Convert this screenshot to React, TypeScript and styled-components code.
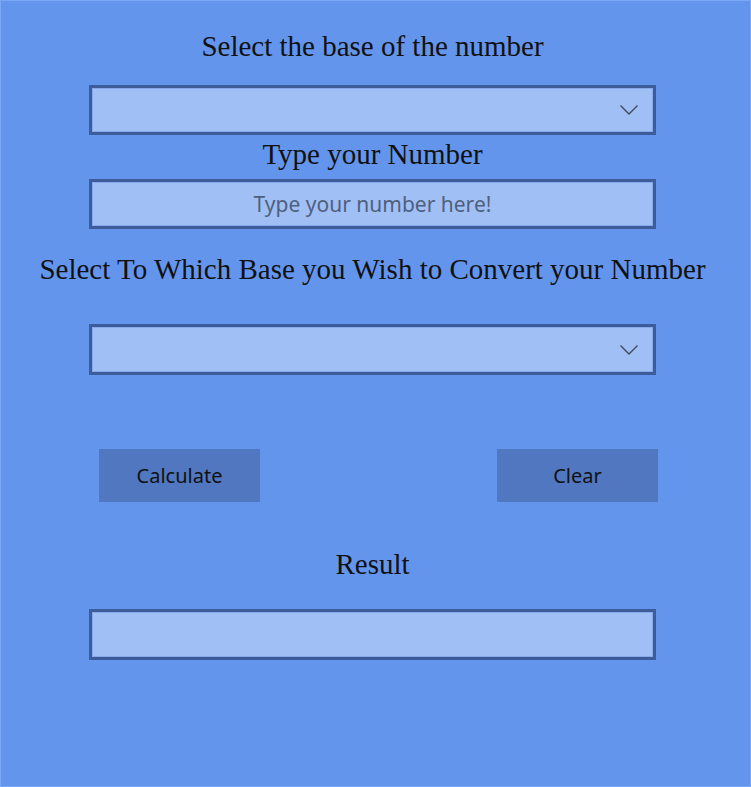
import styled, { createGlobalStyle } from 'styled-components';

const GlobalStyle = createGlobalStyle`
  html, body {
    margin: 0;
    padding: 0;
    background: #6495ed;
  }
  * {
    box-sizing: border-box;
  }
`;

const Window = styled.div`
  width: 751px;
  height: 787px;
  background: #6495ed;
  border: 1px solid #7aa8f7;
  display: flex;
  flex-direction: column;
  padding-top: 31px;
`;

const Column = styled.div`
  width: 743px;
  display: flex;
  flex-direction: column;
  align-items: center;
`;

const Label = styled.div<{ $top?: number }>`
  margin-top: ${(p) => p.$top || 0}px;
  height: 30px;
  line-height: 28px;
  font-family: 'Liberation Serif', 'DejaVu Serif', serif;
  font-size: 29px;
  color: #111;
  white-space: nowrap;
`;

const Field = styled.div<{ $top?: number; $height?: number }>`
  margin-top: ${(p) => p.$top || 0}px;
  width: 567px;
  height: ${(p) => p.$height || 50}px;
  background: #a0bff5;
  border: 3px solid #3d5c99;
  box-shadow: inset 0 0 0 1px #86a9ec;
  display: flex;
  align-items: center;
  justify-content: flex-end;
  padding-right: 14px;
`;

const Chevron = styled.svg`
  width: 20px;
  height: 12px;
`;

const TextField = styled.input<{ $top?: number }>`
  margin-top: ${(p) => p.$top || 0}px;
  width: 567px;
  height: 50px;
  background: #a0bff5;
  border: 3px solid #3d5c99;
  box-shadow: inset 0 0 0 1px #86a9ec;
  outline: none;
  text-align: center;
  font-family: 'Noto Sans', 'Open Sans', sans-serif;
  font-size: 21px;
  color: #222;
  &::placeholder {
    color: #4f5f7e;
  }
`;

const ButtonRow = styled.div<{ $top?: number }>`
  margin-top: ${(p) => p.$top || 0}px;
  align-self: flex-start;
  margin-left: 98px;
  width: 559px;
  display: flex;
  justify-content: space-between;
`;

const Button = styled.button`
  width: 161px;
  height: 53px;
  background: #5077bf;
  border: none;
  font-family: 'Noto Sans', 'Open Sans', sans-serif;
  font-size: 20px;
  color: #111;
  padding: 0;
  cursor: pointer;
`;

const Dropdown: React.FC<{ top: number; height?: number }> = ({ top, height }) => (
  <Field $top={top} $height={height}>
    <Chevron viewBox="0 0 20 12">
      <path d="M1.5 1.5 L10 10 L18.5 1.5" fill="none" stroke="#3e4a60" strokeWidth="1.4" />
    </Chevron>
  </Field>
);

const App: React.FC = () => {
  return (
    <Window>
      <GlobalStyle />
      <Column>
        <Label>Select the base of the number</Label>
        <Dropdown top={23} />
        <Label $top={5}>Type your Number</Label>
        <TextField $top={9} placeholder="Type your number here!" />
        <Label $top={26}>Select To Which Base you Wish to Convert your Number</Label>
        <Dropdown top={39} height={51} />
        <ButtonRow $top={74}>
          <Button>Calculate</Button>
          <Button>Clear</Button>
        </ButtonRow>
        <Label $top={48}>Result</Label>
        <Field $top={29} $height={51} />
      </Column>
    </Window>
  );
};

export default App;
